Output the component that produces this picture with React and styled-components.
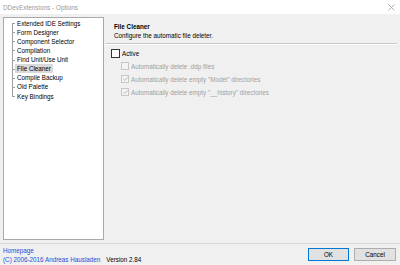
import React from 'react';
import styled, { createGlobalStyle } from 'styled-components';

const GlobalStyle = createGlobalStyle`
  html, body {
    margin: 0;
    padding: 0;
    background: #f0f0f0;
  }
  body {
    font-family: "Liberation Sans", Arial, sans-serif;
    font-size: 6.3px;
    color: #000;
  }
`;

const Window = styled.div`
  width: 400px;
  height: 265px;
  display: flex;
  flex-direction: column;
  background: #f0f0f0;
  overflow: hidden;
`;

const TitleBar = styled.div`
  height: 14px;
  background: #fff;
  display: flex;
  align-items: center;
  justify-content: space-between;
  padding: 0 5px 0 3px;
  color: #999;
  font-size: 6.4px;
`;

const Main = styled.div`
  height: 229px;
  display: flex;
  padding: 3px 3px 3px 3px;
  box-sizing: border-box;
`;

const Tree = styled.div`
  width: 101px;
  background: #fff;
  border: 1px solid #a9a9a9;
  box-sizing: border-box;
`;

const TreeList = styled.ul`
  list-style: none;
  margin: 0 0 0 8px;
  padding: 0.5px 0 0 0;
`;

const TreeItem = styled.li`
  position: relative;
  height: 9.125px;
  line-height: 9.125px;
  padding-left: 3px;
  white-space: nowrap;

  &::before {
    content: '';
    position: absolute;
    left: 0;
    top: 50%;
    width: 3px;
    height: 1px;
    background: #a0a0a0;
  }

  &::after {
    content: '';
    position: absolute;
    left: 0;
    width: 1px;
    background: #a0a0a0;
    top: ${(p) => (p.$first ? '50%' : '0')};
    bottom: ${(p) => (p.$last ? '50%' : '0')};
  }
`;

const ItemLabel = styled.span`
  display: inline-block;
  padding: 0 2px;
  background: ${(p) => (p.$selected ? '#d9d9d9' : 'transparent')};
`;

const Panel = styled.div`
  flex: 1;
  margin-left: 1px;
  display: flex;
  flex-direction: column;
`;

const Header = styled.div`
  padding: 4.5px 0 3.5px 9px;
  line-height: 9px;
  border-bottom: 1px solid #c9c9c9;
  box-shadow: 0 1px 0 #fff;
`;

const HeaderTitle = styled.div`
  font-weight: bold;
`;

const Options = styled.div`
  padding: 2.5px 0 0 6px;
  display: flex;
  flex-direction: column;
`;

const Option = styled.label`
  height: 13px;
  display: flex;
  align-items: center;
  gap: 2px;
  padding-left: ${(p) => (p.$indent ? '10px' : '0')};
  color: ${(p) => (p.$disabled ? '#a0a0a0' : '#000')};
`;

const Box = styled.span`
  width: ${(p) => (p.$disabled ? '6px' : '7px')};
  height: ${(p) => (p.$disabled ? '6px' : '7px')};
  border: 1px solid ${(p) => (p.$disabled ? '#c6c6c6' : '#333')};
  background: ${(p) => (p.$disabled ? '#f4f4f4' : '#fff')};
  display: flex;
  align-items: center;
  justify-content: center;
  flex: none;
`;

const Footer = styled.div`
  flex: 1;
  border-top: 1px solid #d9d9d9;
  display: flex;
  justify-content: space-between;
  padding: 0 4px 0 3px;
`;

const Links = styled.div`
  padding-top: 1.5px;
  line-height: 9px;
  color: #1a4fd6;
`;

const Version = styled.span`
  color: #000;
  margin-left: 6px;
`;

const Buttons = styled.div`
  display: flex;
  gap: 5px;
  padding-top: 4px;
`;

const Button = styled.div`
  width: ${(p) => (p.$primary ? '41px' : '42px')};
  height: 13px;
  box-sizing: border-box;
  background: #e1e1e1;
  border: 1px solid ${(p) => (p.$primary ? '#0078d7' : '#adadad')};
  display: flex;
  align-items: center;
  justify-content: center;
`;

const items = [
  'Extended IDE Settings',
  'Form Designer',
  'Component Selector',
  'Compilation',
  'Find Unit/Use Unit',
  'File Cleaner',
  'Compile Backup',
  'Old Palette',
  'Key Bindings',
];

const Check = () => (
  <svg width="5" height="4" viewBox="0 0 5 4">
    <path d="M0.3 2 L1.8 3.4 L4.7 0.4" fill="none" stroke="#a8a8a8" strokeWidth="0.8" />
  </svg>
);

const CloseIcon = () => (
  <svg width="7" height="7" viewBox="0 0 7 7">
    <path d="M0.5 0.5 L6.5 6.5 M6.5 0.5 L0.5 6.5" stroke="#999" strokeWidth="0.8" />
  </svg>
);

export default function App() {
  return (
    <>
      <GlobalStyle />
      <Window>
        <TitleBar>
          <span>DDevExtensions - Options</span>
          <CloseIcon />
        </TitleBar>
        <Main>
          <Tree>
            <TreeList>
              {items.map((it, i) => (
                <TreeItem key={it} $first={i === 0} $last={i === items.length - 1}>
                  <ItemLabel $selected={it === 'File Cleaner'}>{it}</ItemLabel>
                </TreeItem>
              ))}
            </TreeList>
          </Tree>
          <Panel>
            <Header>
              <HeaderTitle>File Cleaner</HeaderTitle>
              <div>Configure the automatic file deleter.</div>
            </Header>
            <Options>
              <Option>
                <Box />
                Active
              </Option>
              <Option $indent $disabled>
                <Box $disabled />
                Automatically delete .ddp files
              </Option>
              <Option $indent $disabled>
                <Box $disabled><Check /></Box>
                Automatically delete empty "Model" directories
              </Option>
              <Option $indent $disabled>
                <Box $disabled><Check /></Box>
                Automatically delete empty "__history" directories
              </Option>
            </Options>
          </Panel>
        </Main>
        <Footer>
          <Links>
            <div>Homepage</div>
            <div>
              (C) 2006-2016 Andreas Hausladen
              <Version>Version 2.84</Version>
            </div>
          </Links>
          <Buttons>
            <Button $primary>OK</Button>
            <Button>Cancel</Button>
          </Buttons>
        </Footer>
      </Window>
    </>
  );
}
